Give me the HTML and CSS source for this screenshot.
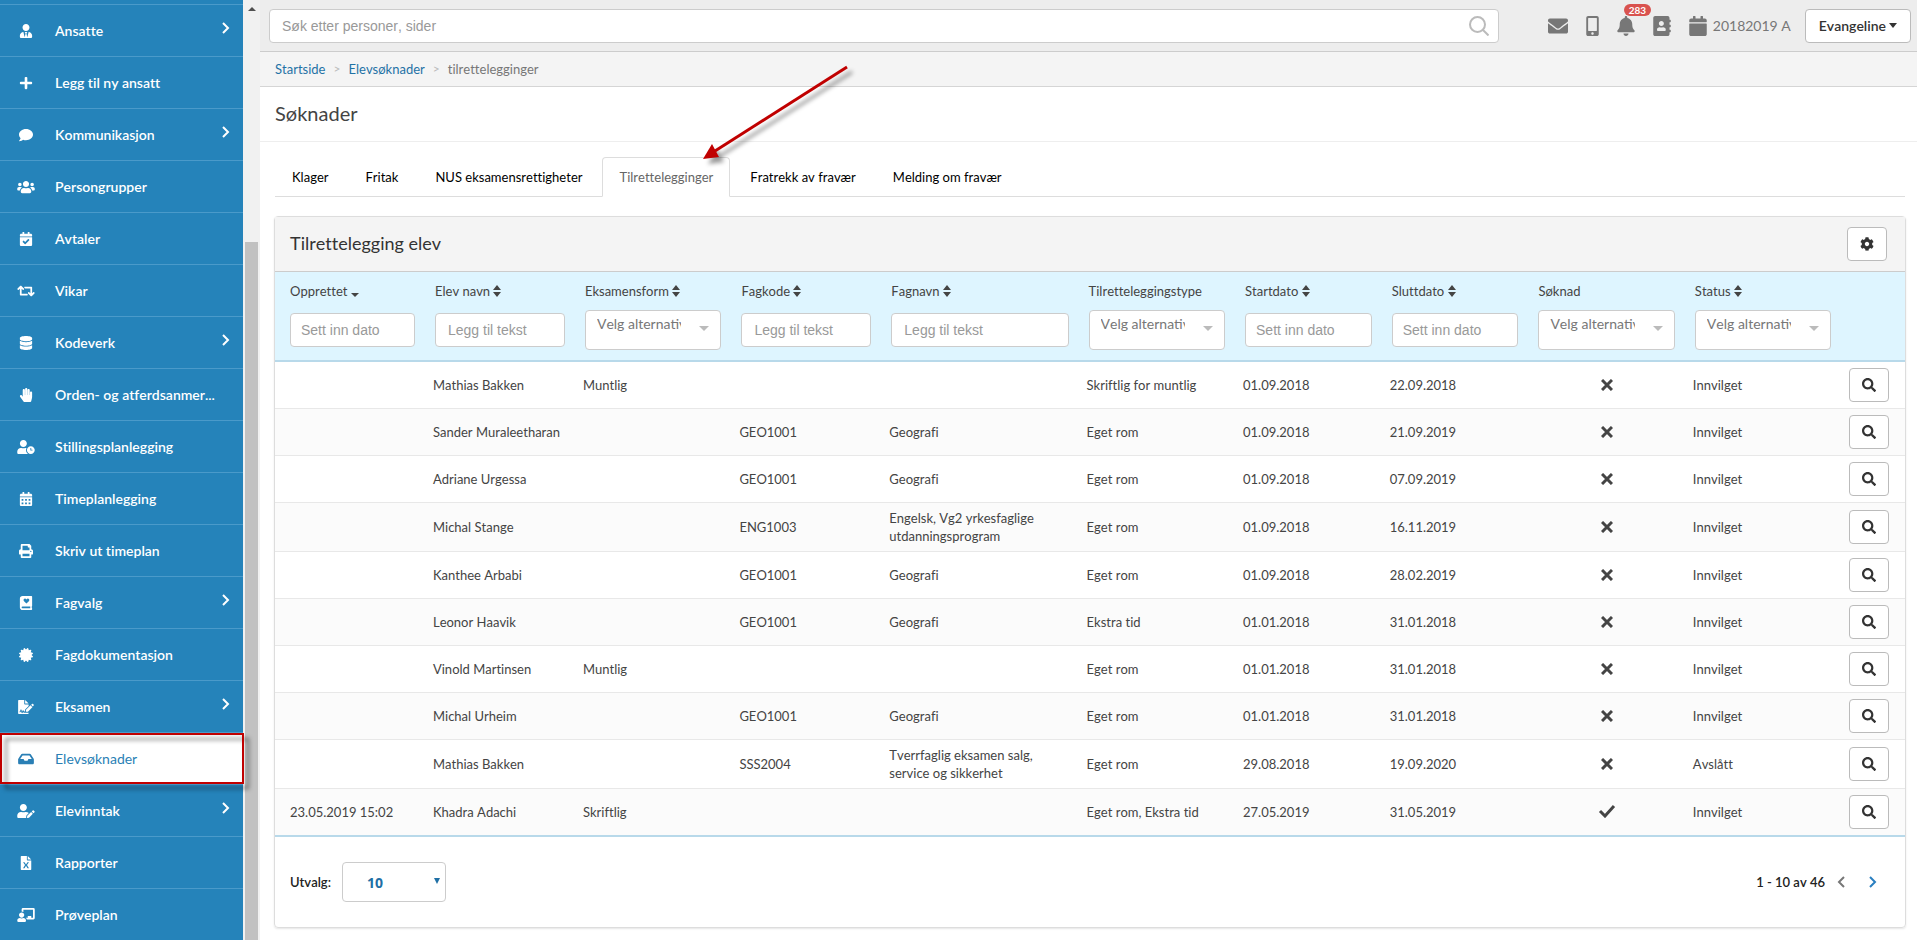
FILE: index.html
```
<!DOCTYPE html>
<html lang="no">
<head>
  <meta charset="UTF-8" />
  <meta name="viewport" content="width=device-width, initial-scale=1" />
  <title>Søknader - tilrettelegginger</title>
  <link rel="stylesheet" href="styles.css">
</head>
<body>
  <!-- Icon set -->
  <svg class="icon-defs" aria-hidden="true">
    <symbol id="i-tie" viewBox="0 0 448 512"><path d="M224 256c70.7 0 128-57.3 128-128S294.7 0 224 0 96 57.3 96 128s57.3 128 128 128zm95.8 32.6L272 480l-32-136 32-56h-96l32 56-32 136-47.8-191.4C56.9 292 0 350.3 0 422.4V464c0 26.5 21.5 48 48 48h352c26.5 0 48-21.5 48-48v-41.6c0-72.1-56.9-130.4-128.2-133.8z"/></symbol>
    <symbol id="i-plus" viewBox="0 0 448 512"><path d="M416 208H272V64c0-17.67-14.33-32-32-32h-32c-17.67 0-32 14.33-32 32v144H32c-17.67 0-32 14.33-32 32v32c0 17.67 14.33 32 32 32h144v144c0 17.67 14.33 32 32 32h32c17.67 0 32-14.33 32-32V304h144c17.67 0 32-14.33 32-32v-32c0-17.67-14.33-32-32-32z"/></symbol>
    <symbol id="i-comment" viewBox="0 0 512 512"><path d="M256 32C114.6 32 0 125.1 0 240c0 49.6 21.4 95 57 130.7C44.5 421.1 2.7 466 2.2 466.5c-2.2 2.3-2.8 5.7-1.5 8.7S4.8 480 8 480c66.3 0 116-31.8 140.6-51.4 32.7 12.3 69 19.4 107.4 19.4 141.4 0 256-93.1 256-208S397.4 32 256 32z"/></symbol>
    <symbol id="i-users" viewBox="0 0 640 512"><path d="M96 224c35.3 0 64-28.7 64-64s-28.7-64-64-64-64 28.7-64 64 28.7 64 64 64zm448 0c35.3 0 64-28.7 64-64s-28.7-64-64-64-64 28.7-64 64 28.7 64 64 64zm32 32h-64c-17.6 0-33.5 7.1-45.1 18.6 40.3 22.1 68.9 62 75.1 109.4h66c17.7 0 32-14.3 32-32v-32c0-35.3-28.7-64-64-64zm-256 0c61.9 0 112-50.1 112-112S381.9 32 320 32 208 82.1 208 144s50.1 112 112 112zm76.8 32h-8.3c-20.8 10-43.9 16-68.5 16s-47.6-6-68.5-16h-8.3C179.6 288 128 339.6 128 403.2V432c0 26.5 21.5 48 48 48h288c26.5 0 48-21.5 48-48v-28.8c0-63.6-51.6-115.2-115.2-115.2zm-223.7-13.4C161.5 263.1 145.6 256 128 256H64c-35.3 0-64 28.7-64 64v32c0 17.7 14.3 32 32 32h65.9c6.3-47.4 34.9-87.3 75.2-109.4z"/></symbol>
    <symbol id="i-calcheck" viewBox="0 0 448 512"><path d="M436 160H12c-6.627 0-12-5.373-12-12v-36c0-26.51 21.49-48 48-48h48V12c0-6.627 5.373-12 12-12h40c6.627 0 12 5.373 12 12v52h128V12c0-6.627 5.373-12 12-12h40c6.627 0 12 5.373 12 12v52h48c26.51 0 48 21.49 48 48v36c0 6.627-5.373 12-12 12zM12 192h424c6.627 0 12 5.373 12 12v260c0 26.51-21.49 48-48 48H48c-26.51 0-48-21.49-48-48V204c0-6.627 5.373-12 12-12zm333.296 95.947l-28.169-28.398c-4.667-4.705-12.265-4.736-16.97-.068L194.12 364.665l-45.98-46.352c-4.667-4.705-12.266-4.736-16.971-.068l-28.397 28.17c-4.705 4.667-4.736 12.265-.068 16.97l82.601 83.269c4.667 4.705 12.265 4.736 16.97.068l142.953-141.805c4.705-4.667 4.736-12.265.068-16.97z"/></symbol>
    <symbol id="i-retweet" viewBox="0 0 640 512"><path d="M629.657 343.598L528.971 444.284c-9.373 9.372-24.568 9.372-33.941 0L394.343 343.598c-9.373-9.373-9.373-24.569 0-33.941l10.823-10.823c9.562-9.562 25.133-9.34 34.419.492L480 342.118V160H292.451a24.005 24.005 0 0 1-16.971-7.029l-16-16C244.361 121.851 255.069 96 276.451 96H520c13.255 0 24 10.745 24 24v222.118l40.416-42.792c9.285-9.831 24.856-10.054 34.419-.492l10.823 10.823c9.372 9.372 9.372 24.569-.001 33.941zm-265.138 15.431A23.999 23.999 0 0 0 347.548 352H160V169.881l40.416 42.792c9.286 9.831 24.856 10.054 34.419.491l10.822-10.822c9.373-9.373 9.373-24.569 0-33.941L144.971 67.716c-9.373-9.373-24.569-9.373-33.941 0L10.343 168.402c-9.373 9.373-9.373 24.569 0 33.941l10.822 10.822c9.562 9.562 25.133 9.34 34.419-.491L96 169.881V392c0 13.255 10.745 24 24 24h243.549c21.382 0 32.09-25.851 16.971-40.971l-16.001-16z"/></symbol>
    <symbol id="i-database" viewBox="0 0 448 512"><path d="M448 73.143v45.714C448 159.143 347.667 192 224 192S0 159.143 0 118.857V73.143C0 32.857 100.333 0 224 0s224 32.857 224 73.143zM448 176v102.857C448 319.143 347.667 352 224 352S0 319.143 0 278.857V176c48.125 33.143 136.208 48.572 224 48.572S399.874 209.143 448 176zm0 160v102.857C448 479.143 347.667 512 224 512S0 479.143 0 438.857V336c48.125 33.143 136.208 48.572 224 48.572S399.874 369.143 448 336z"/></symbol>
    <symbol id="i-hand" viewBox="0 0 448 512"><path d="M408.781 128.007C386.356 127.578 368 146.36 368 168.79V256h-8V79.79c0-22.43-18.356-41.212-40.781-40.783C297.488 39.423 280 57.169 280 79v177h-8V40.79C272 18.36 253.644-.422 231.219.007 209.488.423 192 18.169 192 40v216h-8V80.79c0-22.43-18.356-41.212-40.781-40.783C121.488 40.423 104 58.169 104 80v235.992l-31.648-43.519c-12.993-17.866-38.009-21.817-55.877-8.823-17.865 12.994-21.815 38.01-8.822 55.877l125.601 172.705A48 48 0 0 0 172.073 512h197.59c22.274 0 41.622-15.324 46.724-37.006l26.508-112.66a192.011 192.011 0 0 0 5.104-43.975V168c.001-21.831-17.487-39.577-39.218-39.993z"/></symbol>
    <symbol id="i-userclock" viewBox="0 0 640 512"><path d="M496 224c-79.6 0-144 64.4-144 144s64.4 144 144 144 144-64.4 144-144-64.4-144-144-144zm64 150.3c0 5.3-4.4 9.7-9.7 9.7h-60.6c-5.3 0-9.7-4.4-9.7-9.7v-76.6c0-5.3 4.4-9.7 9.7-9.7h12.6c5.3 0 9.7 4.4 9.7 9.7V352h38.3c5.3 0 9.7 4.4 9.7 9.7v12.6zM320 368c0-27.8 6.7-54.1 18.2-77.5-8-1.5-16.2-2.5-24.6-2.5h-16.7c-22.2 10.2-46.9 16-72.9 16s-50.6-5.8-72.9-16h-16.7C60.2 288 0 348.2 0 422.4V464c0 26.5 21.5 48 48 48h347.1c-45.3-31.9-75.1-84.5-75.1-144zm-96-112c70.7 0 128-57.3 128-128S294.7 0 224 0 96 57.3 96 128s57.3 128 128 128z"/></symbol>
    <symbol id="i-calalt" viewBox="0 0 448 512"><path fill-rule="evenodd" d="M0 160v-48c0-26.500 21.500-48 48-48h48V12q0-12 12-12h40q12 0 12 12v52h128V12q0-12 12-12h40q12 0 12 12v52h48c26.500 0 48 21.500 48 48v48zM0 192h448v272c0 26.500-21.500 48-48 48H48c-26.500 0-48-21.500-48-48zM64 256v64h64v-64zm128 0v64h64v-64zm128 0v64h64v-64zM64 384v64h64v-64zm128 0v64h64v-64zm128 0v64h64v-64z"/></symbol>
    <symbol id="i-print" viewBox="0 0 512 512"><path d="M448 192V77.25c0-8.49-3.37-16.62-9.37-22.63L393.37 9.37c-6-6-14.14-9.37-22.63-9.37H96C78.33 0 64 14.33 64 32v160c-35.35 0-64 28.65-64 64v112c0 8.84 7.16 16 16 16h48v96c0 17.67 14.33 32 32 32h320c17.67 0 32-14.33 32-32v-96h48c8.84 0 16-7.16 16-16V256c0-35.35-28.65-64-64-64zm-64 256H128v-96h256v96zm0-224H128V64h192v48c0 8.84 7.16 16 16 16h48v96zm48 72c-13.25 0-24-10.75-24-24 0-13.26 10.75-24 24-24s24 10.74 24 24c0 13.25-10.75 24-24 24z"/></symbol>
    <symbol id="i-book" viewBox="0 0 448 512"><path fill-rule="evenodd" d="M96 0h328q24 0 24 24v336q0 12-10 18-6 32 0 64 10 6 10 14v32q0 24-24 24H96C43 512 0 469 0 416V96C0 43 43 0 96 0zM96 384c-42 0-42 64 0 64h286q-5-32 0-64zM240 278l88-90c32-34 20-84-20-92-30-6-52 12-68 32-16-20-38-38-68-32-40 8-52 58-20 92z"/></symbol>
    <symbol id="i-cert" viewBox="0 0 512 512"><path d="M458.622 255.92l45.985-45.005c13.708-12.977 7.316-36.039-10.664-40.339l-62.65-15.99 17.661-62.015c4.991-17.838-11.829-34.663-29.661-29.671l-61.994 17.667-15.984-62.671C337.085.197 313.765-6.276 300.99 7.228L256 53.57 211.011 7.229c-12.63-13.351-36.047-7.234-40.325 10.668l-15.984 62.671-61.995-17.667C74.87 57.907 58.056 74.738 63.046 92.572l17.661 62.015-62.65 15.99C.069 174.878-6.31 197.944 7.392 210.915l45.985 45.005-45.985 45.004c-13.708 12.977-7.316 36.039 10.664 40.339l62.65 15.99-17.661 62.015c-4.991 17.838 11.829 34.663 29.661 29.671l61.994-17.667 15.984 62.671c4.439 18.575 27.696 24.018 40.325 10.668L256 458.61l44.989 46.001c12.5 13.488 35.987 7.486 40.325-10.668l15.984-62.671 61.994 17.667c17.836 4.994 34.651-11.837 29.661-29.671l-17.661-62.015 62.65-15.99c17.987-4.302 24.366-27.367 10.664-40.339l-45.984-45.004z"/></symbol>
    <symbol id="i-sign" viewBox="0 0 576 512"><path d="M24 0h200v136q0 24 24 24h136v60L256 346v70H232c-14 0-14-4-22-20-14-28-44-24-54 0l-10 30-20-60c-8-20-36-20-42 0l-18 54H48v26h28c12 0 18-8 24-26l5-16 20 60c6 20 30 22 40 4l12-24c4-8 12-8 16 0 12 24 26 24 50 24h141v20q0 24-24 24H24q-24 0-24-24V24Q0 0 24 0zM256 0l128 128H256zM288 360l166-164 68 68-164 164h-70zM476 174l32-32c10-10 24-10 34 0l26 26c10 10 10 24 0 34l-32 32z"/></symbol>
    <symbol id="i-inbox" viewBox="0 0 576 512"><path d="M567.938 243.908L462.25 85.374A48.003 48.003 0 0 0 422.311 64H153.689a48 48 0 0 0-39.938 21.374L8.062 243.908A47.994 47.994 0 0 0 0 270.533V400c0 26.51 21.49 48 48 48h480c26.51 0 48-21.49 48-48V270.533a47.994 47.994 0 0 0-8.062-26.625zM162.252 128h251.497l85.333 128H376l-32 64H232l-32-64H76.918l85.334-128z"/></symbol>
    <symbol id="i-useredit" viewBox="0 0 640 512"><path d="M224 256c70.7 0 128-57.3 128-128S294.7 0 224 0 96 57.3 96 128s57.3 128 128 128zM314 288h-17c-46 21-100 21-146 0h-17C60 288 0 348 0 422v42c0 26 22 48 48 48h274l12-96 88-88c-28-25-64-40-108-40zM366 434l-14 70q0 8 8 8l70-10 140-142-62-66zM592 338l38-38c12-12 12-24 0-34l-30-30c-10-10-24-10-34 0l-36 38z"/></symbol>
    <symbol id="i-excel" viewBox="0 0 384 512"><path fill-rule="evenodd" d="M24 0h200v136q0 24 24 24h136v328q0 24-24 24H24q-24 0-24-24V24Q0 0 24 0zM256 0l128 128H256zM84 224l72 108-72 116h54l54-90 54 90h54l-72-116 72-108h-54l-54 84-54-84z"/></symbol>
    <symbol id="i-teacher" viewBox="0 0 640 512"><path d="M160 352c53 0 96-43 96-96s-43-96-96-96-96 43-96 96 43 96 96 96zM224 368q-64 32-128 0C40 368 0 410 0 464q0 48 46 48h228q46 0 46-48c0-54-40-96-96-96zM592 0H208q-48 0-48 51v77q36 0 64 18V64h352v288h-64v-64H384v64h-74q32 26 42 64h240q48 0 48-51V51q0-51-48-51z"/></symbol>
    <symbol id="i-chevron" viewBox="0 0 8 12"><path d="M1 1l5 5-5 5" fill="none" stroke="currentColor" stroke-width="2"/></symbol>
    <symbol id="i-mail" viewBox="0 0 512 512"><path d="M502.3 190.8c3.9-3.1 9.7-.2 9.700 4.700V400c0 26.500-21.500 48-48 48H48c-26.500 0-48-21.500-48-48V195.600c0-5 5.700-7.800 9.700-4.700 22.400 17.400 52.100 39.500 154.100 113.600 21.100 15.400 56.700 47.800 92.200 47.600 35.700.3 72-32.800 92.300-47.600 102-74.100 131.600-96.300 154-113.700zM256 320c23.200.4 56.600-29.200 73.400-41.400 132.700-96.300 142.800-104.700 173.400-128.700 5.800-4.500 9.200-11.500 9.200-18.900v-19c0-26.500-21.500-48-48-48H48c-26.500 0-48 21.500-48 48v19c0 7.400 3.400 14.300 9.200 18.900 30.600 23.900 40.700 32.400 173.400 128.700 16.800 12.200 50.200 41.800 73.400 41.400z"/></symbol>
    <symbol id="i-mobile" viewBox="0 0 320 512"><path d="M272 0H48C21.5 0 0 21.5 0 48v416c0 26.5 21.5 48 48 48h224c26.5 0 48-21.5 48-48V48c0-26.5-21.5-48-48-48zM160 480c-17.7 0-32-14.3-32-32s14.3-32 32-32 32 14.3 32 32-14.3 32-32 32zm112-108c0 6.6-5.4 12-12 12H60c-6.6 0-12-5.4-12-12V60c0-6.6 5.4-12 12-12h200c6.6 0 12 5.4 12 12v312z"/></symbol>
    <symbol id="i-bell" viewBox="0 0 448 512"><path d="M224 512c35.32 0 63.97-28.65 63.97-64H160.03c0 35.35 28.65 64 63.97 64zm215.39-149.71c-19.32-20.76-55.47-51.99-55.47-154.29 0-77.7-54.48-139.9-127.94-155.16V32c0-17.67-14.32-32-31.98-32s-31.98 14.33-31.98 32v20.84C118.56 68.1 64.08 130.3 64.08 208c0 102.3-36.15 133.53-55.47 154.29-6 6.45-8.66 14.16-8.61 21.71.11 16.4 12.98 32 32.1 32h383.8c19.12 0 32-15.6 32.1-32 .05-7.55-2.61-15.27-8.61-21.71z"/></symbol>
    <symbol id="i-contacts" viewBox="0 0 448 512"><path d="M436 160c6.6 0 12-5.4 12-12v-40c0-6.6-5.4-12-12-12h-20V48c0-26.5-21.5-48-48-48H48C21.5 0 0 21.5 0 48v416c0 26.5 21.5 48 48 48h320c26.5 0 48-21.5 48-48v-48h20c6.6 0 12-5.4 12-12v-40c0-6.6-5.4-12-12-12h-20v-64h20c6.6 0 12-5.4 12-12v-40c0-6.6-5.4-12-12-12h-20v-64h20zm-228-32c35.3 0 64 28.7 64 64s-28.7 64-64 64-64-28.7-64-64 28.7-64 64-64zm112 236.8c0 10.6-10 19.2-22.4 19.2H118.4C106 384 96 375.4 96 364.8v-19.2c0-31.8 30.1-57.6 67.2-57.6h5c12.3 5.1 25.7 8 39.8 8s27.6-2.9 39.8-8h5c37.1 0 67.2 25.8 67.2 57.6v19.2z"/></symbol>
    <symbol id="i-cal" viewBox="0 0 448 512"><path d="M12 192h424c6.6 0 12 5.4 12 12v260c0 26.5-21.5 48-48 48H48c-26.5 0-48-21.5-48-48V204c0-6.6 5.4-12 12-12zm436-44v-36c0-26.5-21.5-48-48-48h-48V12c0-6.6-5.4-12-12-12h-40c-6.6 0-12 5.4-12 12v52H160V12c0-6.6-5.4-12-12-12h-40c-6.6 0-12 5.4-12 12v52H48C21.5 64 0 85.5 0 112v36c0 6.6 5.4 12 12 12h424c6.6 0 12-5.4 12-12z"/></symbol>
    <symbol id="i-loupe" viewBox="0 0 20 20"><g fill="none" stroke="currentColor" stroke-width="2"><circle cx="8.500" cy="8.500" r="7.500"/><path d="M14 14l5.500 5.500"/></g></symbol>
    <symbol id="i-search" viewBox="0 0 512 512"><path d="M505 442.7L405.3 343c-4.5-4.5-10.6-7-17-7H372c27.6-35.3 44-79.7 44-128C416 93.1 322.9 0 208 0S0 93.1 0 208s93.1 208 208 208c48.3 0 92.7-16.4 128-44v16.3c0 6.4 2.5 12.5 7 17l99.7 99.7c9.4 9.4 24.6 9.4 33.9 0l28.3-28.3c9.4-9.4 9.4-24.6.1-34zM208 336c-70.7 0-128-57.2-128-128 0-70.7 57.2-128 128-128 70.7 0 128 57.2 128 128 0 70.7-57.2 128-128 128z"/></symbol>
    <symbol id="i-cog" viewBox="0 0 512 512"><path d="M487.4 315.7l-42.6-24.6c4.3-23.2 4.3-47 0-70.2l42.6-24.6c4.9-2.8 7.1-8.6 5.5-14-11.1-35.6-30-67.8-54.7-94.6-3.8-4.1-10-5.1-14.8-2.3L380.8 110c-17.9-15.4-38.5-27.3-60.8-35.1V25.8c0-5.6-3.9-10.5-9.4-11.7-36.7-8.2-74.3-7.8-109.2 0-5.5 1.2-9.4 6.1-9.4 11.7V75c-22.2 7.9-42.8 19.8-60.8 35.1L88.7 85.5c-4.9-2.8-11-1.9-14.8 2.3-24.7 26.7-43.6 58.9-54.7 94.6-1.7 5.4.6 11.2 5.5 14L67.3 221c-4.3 23.2-4.3 47 0 70.2l-42.6 24.6c-4.9 2.8-7.1 8.6-5.5 14 11.1 35.6 30 67.8 54.7 94.6 3.8 4.1 10 5.1 14.8 2.3l42.6-24.6c17.9 15.4 38.5 27.3 60.8 35.1v49.2c0 5.6 3.9 10.5 9.4 11.7 36.7 8.2 74.3 7.8 109.2 0 5.5-1.2 9.4-6.1 9.4-11.7v-49.2c22.2-7.9 42.8-19.8 60.8-35.1l42.6 24.6c4.9 2.8 11 1.9 14.8-2.3 24.7-26.7 43.6-58.9 54.7-94.6 1.5-5.5-.7-11.3-5.6-14.1zM256 336c-44.1 0-80-35.9-80-80s35.9-80 80-80 80 35.9 80 80-35.9 80-80 80z"/></symbol>
    <symbol id="i-sort" viewBox="0 0 8 12"><path d="M4 0l4 5H0zM4 12l4-5H0z"/></symbol>
    <symbol id="i-sortdown" viewBox="0 0 8 12"><path d="M4 12l4-4H0z"/></symbol>
    <symbol id="i-cross" viewBox="0 0 12 12"><path d="M1 1l10 10M11 1L1 11" fill="none" stroke="currentColor" stroke-width="3"/></symbol>
    <symbol id="i-check" viewBox="0 0 18 14"><path d="M2 7l5 5 9-10" fill="none" stroke="currentColor" stroke-width="3"/></symbol>
  </svg>

  <div class="layout">
    <nav class="sidebar" aria-label="Hovedmeny">
      <ul>
        <li><a href="#"><svg class="nav-icon"><use href="#i-tie"/></svg><span>Ansatte</span><svg class="more"><use href="#i-chevron"/></svg></a></li>
        <li><a href="#"><svg class="nav-icon"><use href="#i-plus"/></svg><span>Legg til ny ansatt</span></a></li>
        <li><a href="#"><svg class="nav-icon"><use href="#i-comment"/></svg><span>Kommunikasjon</span><svg class="more"><use href="#i-chevron"/></svg></a></li>
        <li><a href="#"><svg class="nav-icon"><use href="#i-users"/></svg><span>Persongrupper</span></a></li>
        <li><a href="#"><svg class="nav-icon"><use href="#i-calcheck"/></svg><span>Avtaler</span></a></li>
        <li><a href="#"><svg class="nav-icon"><use href="#i-retweet"/></svg><span>Vikar</span></a></li>
        <li><a href="#"><svg class="nav-icon"><use href="#i-database"/></svg><span>Kodeverk</span><svg class="more"><use href="#i-chevron"/></svg></a></li>
        <li><a href="#"><svg class="nav-icon"><use href="#i-hand"/></svg><span>Orden- og atferdsanmer...</span></a></li>
        <li><a href="#"><svg class="nav-icon"><use href="#i-userclock"/></svg><span>Stillingsplanlegging</span></a></li>
        <li><a href="#"><svg class="nav-icon"><use href="#i-calalt"/></svg><span>Timeplanlegging</span></a></li>
        <li><a href="#"><svg class="nav-icon"><use href="#i-print"/></svg><span>Skriv ut timeplan</span></a></li>
        <li><a href="#"><svg class="nav-icon"><use href="#i-book"/></svg><span>Fagvalg</span><svg class="more"><use href="#i-chevron"/></svg></a></li>
        <li><a href="#"><svg class="nav-icon"><use href="#i-cert"/></svg><span>Fagdokumentasjon</span></a></li>
        <li><a href="#"><svg class="nav-icon"><use href="#i-sign"/></svg><span>Eksamen</span><svg class="more"><use href="#i-chevron"/></svg></a></li>
        <li class="active"><a href="#"><svg class="nav-icon"><use href="#i-inbox"/></svg><span>Elevsøknader</span></a></li>
        <li><a href="#"><svg class="nav-icon"><use href="#i-useredit"/></svg><span>Elevinntak</span><svg class="more"><use href="#i-chevron"/></svg></a></li>
        <li><a href="#"><svg class="nav-icon"><use href="#i-excel"/></svg><span>Rapporter</span></a></li>
        <li><a href="#"><svg class="nav-icon"><use href="#i-teacher"/></svg><span>Prøveplan</span></a></li>
      </ul>
    </nav>
    <div class="scrollbar"><div class="scroll-up"></div><div class="scroll-thumb"></div></div>

    <div class="page">
      <header class="topbar">
        <div class="search">
          <input type="text" placeholder="Søk etter personer, sider" aria-label="Søk">
          <svg><use href="#i-loupe"/></svg>
        </div>
        <div class="tools">
          <a href="#" aria-label="Meldinger"><svg class="w20"><use href="#i-mail"/></svg></a>
          <a href="#" aria-label="SMS"><svg class="w13"><use href="#i-mobile"/></svg></a>
          <a href="#" class="alerts" aria-label="Varsler"><svg class="w18"><use href="#i-bell"/></svg><span class="badge">283</span></a>
          <a href="#" aria-label="Kontakter"><svg class="w18"><use href="#i-contacts"/></svg></a>
          <a href="#" class="year"><svg class="w18"><use href="#i-cal"/></svg>20182019 A</a>
        </div>
        <button class="user">Evangeline<span class="caret"></span></button>
      </header>

      <div class="breadcrumb">
        <a href="#">Startside</a><i>&gt;</i><a href="#">Elevsøknader</a><i>&gt;</i><span>tilrettelegginger</span>
      </div>

      <h1>Søknader</h1>

      <div class="tabs">
        <a href="#">Klager</a>
        <a href="#">Fritak</a>
        <a href="#">NUS eksamensrettigheter</a>
        <a href="#" class="active">Tilrettelegginger
          <svg class="pointer" viewBox="0 0 160 105"><path d="M146 4L14 88" stroke="#c00000" stroke-width="3"/><path d="M2 96l9-15 7 13z" fill="#c00000"/></svg>
        </a>
        <a href="#">Fratrekk av fravær</a>
        <a href="#">Melding om fravær</a>
      </div>

      <section class="panel">
        <div class="panel-head">
          <h2>Tilrettelegging elev</h2>
          <button class="btn" aria-label="Innstillinger"><svg><use href="#i-cog"/></svg></button>
        </div>

        <table>
          <colgroup>
            <col class="c-m"><col class="c-m"><col class="c-l"><col class="c-m"><col class="c-xl"><col class="c-l"><col class="c-s"><col class="c-s"><col class="c-l"><col class="c-l"><col>
          </colgroup>
          <thead>
            <tr>
              <th><label for="f1">Opprettet <svg class="sort"><use href="#i-sortdown"/></svg></label><div class="filter"><input id="f1" class="date" type="text" placeholder="Sett inn dato"></div></th>
              <th><label for="f2">Elev navn <svg class="sort"><use href="#i-sort"/></svg></label><div class="filter"><input id="f2" type="text" placeholder="Legg til tekst"></div></th>
              <th><label for="f3">Eksamensform <svg class="sort"><use href="#i-sort"/></svg></label><div class="filter pick"><select id="f3"><option>Velg alternativ</option></select></div></th>
              <th><label for="f4">Fagkode <svg class="sort"><use href="#i-sort"/></svg></label><div class="filter"><input id="f4" type="text" placeholder="Legg til tekst"></div></th>
              <th><label for="f5">Fagnavn <svg class="sort"><use href="#i-sort"/></svg></label><div class="filter"><input id="f5" type="text" placeholder="Legg til tekst"></div></th>
              <th><label for="f6">Tilretteleggingstype</label><div class="filter pick"><select id="f6"><option>Velg alternativ</option></select></div></th>
              <th><label for="f7">Startdato <svg class="sort"><use href="#i-sort"/></svg></label><div class="filter"><input id="f7" class="date" type="text" placeholder="Sett inn dato"></div></th>
              <th><label for="f8">Sluttdato <svg class="sort"><use href="#i-sort"/></svg></label><div class="filter"><input id="f8" class="date" type="text" placeholder="Sett inn dato"></div></th>
              <th><label for="f9">Søknad</label><div class="filter pick"><select id="f9"><option>Velg alternativ</option></select></div></th>
              <th><label for="f10">Status <svg class="sort"><use href="#i-sort"/></svg></label><div class="filter pick"><select id="f10"><option>Velg alternativ</option></select></div></th>
              <th></th>
            </tr>
          </thead>
          <tbody>
            <tr><td></td><td>Mathias Bakken</td><td>Muntlig</td><td></td><td></td><td>Skriftlig for muntlig</td><td>01.09.2018</td><td>22.09.2018</td><td class="mark"><svg><use href="#i-cross"/></svg></td><td>Innvilget</td><td><button class="btn" aria-label="Vis"><svg><use href="#i-search"/></svg></button></td></tr>
            <tr><td></td><td>Sander Muraleetharan</td><td></td><td>GEO1001</td><td>Geografi</td><td>Eget rom</td><td>01.09.2018</td><td>21.09.2019</td><td class="mark"><svg><use href="#i-cross"/></svg></td><td>Innvilget</td><td><button class="btn" aria-label="Vis"><svg><use href="#i-search"/></svg></button></td></tr>
            <tr><td></td><td>Adriane Urgessa</td><td></td><td>GEO1001</td><td>Geografi</td><td>Eget rom</td><td>01.09.2018</td><td>07.09.2019</td><td class="mark"><svg><use href="#i-cross"/></svg></td><td>Innvilget</td><td><button class="btn" aria-label="Vis"><svg><use href="#i-search"/></svg></button></td></tr>
            <tr><td></td><td>Michal Stange</td><td></td><td>ENG1003</td><td>Engelsk, Vg2 yrkesfaglige utdanningsprogram</td><td>Eget rom</td><td>01.09.2018</td><td>16.11.2019</td><td class="mark"><svg><use href="#i-cross"/></svg></td><td>Innvilget</td><td><button class="btn" aria-label="Vis"><svg><use href="#i-search"/></svg></button></td></tr>
            <tr><td></td><td>Kanthee Arbabi</td><td></td><td>GEO1001</td><td>Geografi</td><td>Eget rom</td><td>01.09.2018</td><td>28.02.2019</td><td class="mark"><svg><use href="#i-cross"/></svg></td><td>Innvilget</td><td><button class="btn" aria-label="Vis"><svg><use href="#i-search"/></svg></button></td></tr>
            <tr><td></td><td>Leonor Haavik</td><td></td><td>GEO1001</td><td>Geografi</td><td>Ekstra tid</td><td>01.01.2018</td><td>31.01.2018</td><td class="mark"><svg><use href="#i-cross"/></svg></td><td>Innvilget</td><td><button class="btn" aria-label="Vis"><svg><use href="#i-search"/></svg></button></td></tr>
            <tr><td></td><td>Vinold Martinsen</td><td>Muntlig</td><td></td><td></td><td>Eget rom</td><td>01.01.2018</td><td>31.01.2018</td><td class="mark"><svg><use href="#i-cross"/></svg></td><td>Innvilget</td><td><button class="btn" aria-label="Vis"><svg><use href="#i-search"/></svg></button></td></tr>
            <tr><td></td><td>Michal Urheim</td><td></td><td>GEO1001</td><td>Geografi</td><td>Eget rom</td><td>01.01.2018</td><td>31.01.2018</td><td class="mark"><svg><use href="#i-cross"/></svg></td><td>Innvilget</td><td><button class="btn" aria-label="Vis"><svg><use href="#i-search"/></svg></button></td></tr>
            <tr><td></td><td>Mathias Bakken</td><td></td><td>SSS2004</td><td>Tverrfaglig eksamen salg, service og sikkerhet</td><td>Eget rom</td><td>29.08.2018</td><td>19.09.2020</td><td class="mark"><svg><use href="#i-cross"/></svg></td><td>Avslått</td><td><button class="btn" aria-label="Vis"><svg><use href="#i-search"/></svg></button></td></tr>
            <tr><td>23.05.2019 15:02</td><td>Khadra Adachi</td><td>Skriftlig</td><td></td><td></td><td>Eget rom, Ekstra tid</td><td>27.05.2019</td><td>31.05.2019</td><td class="mark"><svg class="yes"><use href="#i-check"/></svg></td><td>Innvilget</td><td><button class="btn" aria-label="Vis"><svg><use href="#i-search"/></svg></button></td></tr>
          </tbody>
        </table>

        <div class="panel-foot">
          <label for="size">Utvalg:</label>
          <div class="size"><select id="size"><option>10</option></select></div>
          <div class="pager">
            <span>1 - 10 av 46</span>
            <button class="prev" aria-label="Forrige"><svg><use href="#i-chevron"/></svg></button>
            <button class="next" aria-label="Neste"><svg><use href="#i-chevron"/></svg></button>
          </div>
        </div>
      </section>
    </div>
  </div>
</body>
</html>
```
FILE: styles.css
```
* {
  box-sizing: border-box;
}

body {
  margin: 0;
  font-family: Lato, sans-serif;
  font-size: 14px;
  line-height: 20px;
  font-kerning: none;
  font-variant-ligatures: none;
  color: #444;
  background: #fff;
}

a {
  color: #1f72a6;
  text-decoration: none;
}

svg {
  fill: currentColor;
  flex: none;
}

input, select, button {
  font-family: inherit;
  font-size: 14px;
  font-kerning: none;
  color: #444;
  background: #fff;
  border: 1px solid #ccc;
  border-radius: 4px;
}

input {
  font-family: "Liberation Sans", Arial, sans-serif;
  height: 34px;
  padding: 0 12px;
}

input::placeholder {
  color: #999;
}

select {
  appearance: none;
}

.icon-defs {
  display: none;
}

.layout {
  display: flex;
  height: 100vh;
  overflow: hidden;
}

/* Sidebar */
.sidebar {
  flex: none;
  width: 243px;
  padding-top: 4px;
  background: #2583ba;
}

.sidebar ul {
  margin: 0;
  padding: 0;
  list-style: none;
}

.sidebar li {
  position: relative;
  border-top: 1px solid #4a9aca;
}

.sidebar a {
  display: flex;
  align-items: center;
  height: 51px;
  padding: 0 13px 0 16px;
  color: #fff;
  font-weight: 600;
}

.sidebar span {
  flex: 1;
  margin-left: 19px;
  white-space: nowrap;
}

.nav-icon {
  width: 20px;
  height: 14px;
}

.more {
  width: 8px;
  height: 12px;
  margin-bottom: 5px;
}

.sidebar .active {
  z-index: 2;
  background: #fff;
}

.sidebar .active a {
  color: #2a7fb5;
  font-weight: normal;
}

/* red frame round the current item */
.sidebar .active::after {
  content: "";
  position: absolute;
  inset: 0 -1px 0 0;
  border: 2px solid #c00000;
  filter: drop-shadow(5px 5px 2px rgba(0, 0, 0, 0.5));
  pointer-events: none;
}

.scrollbar {
  flex: none;
  display: flex;
  flex-direction: column;
  width: 17px;
  padding: 0 2px;
  background: #f1f1f1;
}

.scroll-up {
  height: 242px;
}

.scroll-up::before {
  content: "";
  display: block;
  width: 0;
  margin: 7px auto 0 3px;
  border: 4px solid transparent;
  border-top: 0;
  border-bottom-color: #505050;
}

.scroll-thumb {
  flex: 1;
  background: #c1c1c1;
}

/* Page */
.page {
  flex: 1;
  min-width: 0;
}

.topbar {
  display: flex;
  align-items: center;
  height: 52px;
  padding: 0 6px 0 9px;
  background: #ededed;
  border-bottom: 1px solid #ccc;
}

.search {
  position: relative;
  flex: 1;
}

.search input {
  display: block;
  width: 100%;
}

.search svg {
  position: absolute;
  top: 7px;
  right: 10px;
  width: 20px;
  height: 20px;
  color: #bbb;
}

.tools {
  display: flex;
  gap: 18px;
  margin: 0 14px 0 49px;
}

.tools a {
  display: flex;
  align-items: center;
  color: #777;
}

.tools svg {
  height: 20px;
}

.w20 { width: 20px; }
.w18 { width: 18px; }
.w13 { width: 13px; }

.alerts {
  position: relative;
}

.badge {
  position: absolute;
  top: -12px;
  left: 7px;
  padding: 0 5px;
  border-radius: 6px;
  background: #d9534f;
  color: #fff;
  font-size: 10px;
  font-weight: bold;
  line-height: 12px;
}

.tools .year {
  gap: 6px;
}

.user {
  display: flex;
  align-items: center;
  gap: 3px;
  height: 34px;
  padding: 0 13px;
  border-color: #bbb;
  color: #333;
  font-weight: 600;
}

.caret {
  border: 4px solid transparent;
  border-top: 5px solid #333;
  border-bottom: 0;
}

.breadcrumb {
  display: flex;
  align-items: center;
  height: 35px;
  padding: 0 15px;
  background: #f4f4f4;
  border-bottom: 1px solid #d5d5d5;
  color: #777;
  font-size: 13px;
}

.breadcrumb i {
  margin: 0 8px;
  color: #bbb;
  font-size: 12px;
  font-style: normal;
}

h1, h2 {
  margin: 0;
  font-weight: normal;
}

h1 {
  padding: 13px 15px 15px;
  border-bottom: 1px solid #eee;
  font-size: 20px;
  line-height: 26px;
}

.tabs {
  display: flex;
  gap: 3px;
  margin: 15px 12px 0 15px;
  border-bottom: 1px solid #ddd;
}

.tabs a {
  position: relative;
  margin-bottom: -1px;
  padding: 9px 16px;
  border: 1px solid transparent;
  border-radius: 4px 4px 0 0;
  color: #000;
  font-size: 13px;
}

.tabs .active {
  color: #666;
  background: #fff;
  border-color: #ddd #ddd #fff;
}

/* arrow pointing at the open tab */
.pointer {
  position: absolute;
  top: -95px;
  left: 98px;
  width: 160px;
  height: 105px;
  overflow: visible;
  filter: drop-shadow(5px 5px 2px rgba(0, 0, 0, 0.4));
  pointer-events: none;
}

/* Panel */
.panel {
  margin: 19px 11px 0 14px;
  border: 1px solid #ddd;
  border-radius: 4px;
  box-shadow: 0 1px 2px rgba(0, 0, 0, 0.1);
}

.panel-head {
  display: flex;
  align-items: center;
  justify-content: space-between;
  height: 55px;
  padding: 0 18px 0 15px;
  background: #f4f4f4;
  border-bottom: 1px solid #ccc;
}

h2 {
  padding-bottom: 2px;
  color: #333;
  font-size: 18px;
}

.btn {
  display: flex;
  align-items: center;
  justify-content: center;
  width: 40px;
  height: 34px;
  padding: 0;
  border-color: #bbb;
  color: #333;
}

.btn svg {
  width: 14px;
  height: 14px;
}

table {
  width: 100%;
  table-layout: fixed;
  border-collapse: separate;
  border-spacing: 0;
  border-bottom: 2px solid #b8d9ea;
  font-size: 13px;
}

.c-s { width: 9%; }
.c-m { width: 9.2%; }
.c-l { width: 9.6%; }
.c-xl { width: 12.1%; }

th {
  padding: 9px 10px 10px;
  background: #def5ff;
  border-bottom: 2px solid #b8d9ea;
  font-weight: normal;
  text-align: left;
  vertical-align: top;
}

th:first-child, td:first-child {
  padding-left: 15px;
}

th label {
  display: block;
  white-space: nowrap;
}

.sort {
  width: 8px;
  height: 12px;
  vertical-align: -1px;
}

.filter {
  position: relative;
  display: flex;
  align-items: center;
  height: 40px;
  margin-top: 9px;
}

.filter input {
  width: 100%;
}

.filter .date {
  padding: 0 10px;
}

.filter select {
  width: 100%;
  height: 40px;
  padding: 0 39px 13px 11px;
  color: #777;
}

.pick::after {
  content: "";
  position: absolute;
  top: 16px;
  right: 12px;
  border: 5px solid transparent;
  border-top-color: #bbb;
  border-bottom: 0;
  pointer-events: none;
}

td {
  padding: 6px 8px;
  border-bottom: 1px solid #e8e8e8;
  line-height: 18px;
}

tbody tr:nth-child(even) {
  background: #fbfbfb;
}

tbody tr:last-child td {
  border-bottom: 0;
}

.mark {
  text-align: center;
}

.mark svg {
  width: 12px;
  height: 12px;
  vertical-align: -1px;
}

.mark .yes {
  width: 18px;
  height: 14px;
}

.panel-foot {
  display: flex;
  align-items: center;
  padding: 25px 24px 25px 15px;
  color: #222;
  font-size: 13px;
  font-weight: 600;
}

.size {
  position: relative;
  margin-left: 11px;
}

.size select {
  width: 104px;
  height: 40px;
  padding: 0 24px;
  color: #1f6fa5;
  font-family: "Open Sans", sans-serif;
  font-size: 14px;
  font-weight: bold;
}

.size::after {
  content: "";
  position: absolute;
  top: 16px;
  right: 6px;
  border: 3px solid transparent;
  border-top: 6px solid #1f6fa5;
  border-bottom: 0;
  pointer-events: none;
}

.pager {
  display: flex;
  align-items: center;
  gap: 8px;
  margin-left: auto;
}

.pager button {
  display: flex;
  padding: 4px;
  border: 0;
  color: #777;
}

.pager .next {
  margin-left: 8px;
  color: #2a7fc0;
}

.pager svg {
  width: 8px;
  height: 12px;
}

.prev svg {
  transform: scaleX(-1);
}
```
